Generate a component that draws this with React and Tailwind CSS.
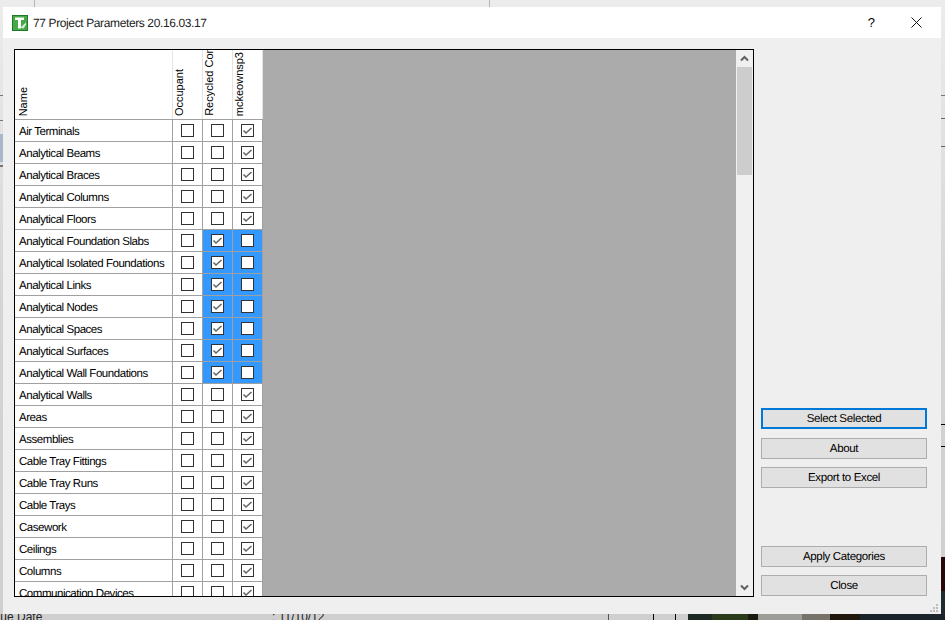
import React from 'react';

const ROWS = [
  ['Air Terminals', false, false, true],
  ['Analytical Beams', false, false, true],
  ['Analytical Braces', false, false, true],
  ['Analytical Columns', false, false, true],
  ['Analytical Floors', false, false, true],
  ['Analytical Foundation Slabs', false, true, false, true],
  ['Analytical Isolated Foundations', false, true, false, true],
  ['Analytical Links', false, true, false, true],
  ['Analytical Nodes', false, true, false, true],
  ['Analytical Spaces', false, true, false, true],
  ['Analytical Surfaces', false, true, false, true],
  ['Analytical Wall Foundations', false, true, false, true],
  ['Analytical Walls', false, false, true],
  ['Areas', false, false, true],
  ['Assemblies', false, false, true],
  ['Cable Tray Fittings', false, false, true],
  ['Cable Tray Runs', false, false, true],
  ['Cable Trays', false, false, true],
  ['Casework', false, false, true],
  ['Ceilings', false, false, true],
  ['Columns', false, false, true],
  ['Communication Devices', false, false, true],
];

const Check = ({ checked }) => (
  <span className="flex h-[13px] w-[13px] items-center justify-center border border-[#333333] bg-white">
    {checked && (
      <svg width="11" height="11" viewBox="0 0 11 11" fill="none">
        <path d="M1.5 5.5 L4 8 L9.5 3" stroke="#666666" strokeWidth="1.6" />
      </svg>
    )}
  </span>
);

const Cell = ({ checked, selected }) => (
  <div className={`flex w-[30px] items-center justify-center border-r border-[#a0a0a0] ${selected ? 'bg-[#3399ff]' : 'bg-white'}`}>
    <Check checked={checked} />
  </div>
);

const HeaderCell = ({ label, width }) => (
  <div className={`flex h-full items-end justify-start overflow-hidden border-r border-[#e4e4e4] bg-white ${width}`}>
    <span className="rotate-180 whitespace-nowrap pt-[3px] text-[11px] leading-[12px] text-black [writing-mode:vertical-rl]">
      {label}
    </span>
  </div>
);

const Btn = ({ children, focused, className = '' }) => (
  <button
    className={`h-[21px] w-[166px] shrink-0 bg-[#e1e1e1] pt-[3px] text-[11.5px] leading-none tracking-[-0.35px] text-black [text-rendering:geometricPrecision] ${focused ? 'border-2 border-[#0078d7]' : 'border border-[#adadad]'} ${className}`}
  >
    {children}
  </button>
);

export default function App() {
  return (
    <div className="relative h-[620px] w-[945px] overflow-hidden bg-gradient-to-b from-[#ececec] via-[#d4d4d4] to-[#cfcfcf] pb-[6px] pl-[3px] pr-[4px] pt-[7px] font-['Liberation_Sans',Arial,sans-serif]">
      {/* Bits of the window behind the dialog */}
      <div className="absolute left-[34px] top-0 h-[7px] w-px bg-[#b5b5b5]" />
      <div className="absolute left-[489px] top-0 h-[7px] w-px bg-[#b5b5b5]" />
      <div className="absolute left-0 top-[134px] h-[28px] w-[3px] bg-[#a9b8c9]" />
      <div className="absolute left-0 top-[95px] h-px w-[3px] bg-[#777777]" />
      <div className="absolute left-0 top-[120px] h-px w-[3px] bg-[#777777]" />
      <div className="absolute left-0 top-[165px] h-[2px] w-[3px] bg-[#777777]" />
      <div className="absolute right-0 top-[95px] h-px w-[4px] bg-[#777777]" />
      <div className="absolute right-0 top-[118px] h-px w-[4px] bg-[#666666]" />
      <div className="absolute right-0 top-[146px] h-px w-[4px] bg-[#666666]" />
      <div className="absolute right-0 top-[424px] h-px w-[4px] bg-black" />
      <div className="absolute right-0 top-[446px] h-px w-[4px] bg-black" />
      <div className="absolute right-0 top-[557px] h-[34px] w-[4px] bg-[#2a0505]" />
      <div className="absolute right-0 top-[591px] h-[29px] w-[4px] bg-[#1c2b30]" />
      <div className="absolute bottom-0 left-[688px] flex h-[6px] w-[257px]">
        <div className="w-[24px] bg-[#1d2a24]" />
        <div className="w-[36px] bg-[#2c3a1c]" />
        <div className="w-[10px] bg-[#1a1a10]" />
        <div className="w-[44px] bg-[#9c9c98]" />
        <div className="w-[28px] bg-[#77726a]" />
        <div className="w-[30px] bg-[#20180c]" />
        <div className="flex-1 bg-[#1b2428]" />
      </div>
      <div className="absolute bottom-0 left-[608px] h-[6px] w-px bg-[#555555]" />
      <div className="absolute bottom-0 left-[653px] h-[6px] w-px bg-black" />
      <div className="absolute bottom-0 left-[675px] h-[6px] w-px bg-black" />
      <div className="absolute left-[-15px] top-[610px] text-[12px] leading-[14px] text-[#222222]">Issue Date</div>
      <div className="absolute left-[272px] top-[610px] text-[12px] leading-[14px] text-[#222222]">: 11/10/12</div>

      {/* Dialog */}
      <div className="relative flex h-full flex-col bg-[#efefef]">
        {/* Title bar */}
        <div className="flex h-[31px] shrink-0 items-center bg-white pl-[9px]">
          <svg width="16" height="16" viewBox="0 0 16 16" className="shrink-0">
            <rect width="16" height="16" fill="#1f7a2a" />
            <rect x="1" y="1" width="14" height="14" fill="#46a846" />
            <path d="M3 2.5h9V5H9v8.5H6V5H3z" fill="#ffffff" />
            <path d="M8.5 12.5 L14 7.5 L14 9.5 L11.5 13.5 Z" fill="#d8f0d8" />
          </svg>
          <span className="ml-[5px] text-[12px] leading-none tracking-[-0.38px] text-[#222222] [text-rendering:geometricPrecision]">77 Project Parameters 20.16.03.17</span>
          <span className="ml-auto mr-[36px] text-[13px] text-black">?</span>
          <svg width="11" height="11" viewBox="0 0 11 11" className="mr-[19px]" fill="none">
            <path d="M0.5 0.5 L10.5 10.5 M10.5 0.5 L0.5 10.5" stroke="#111111" />
          </svg>
        </div>

        <div className="flex min-h-0 flex-1 pl-[11px] pr-[14px] pt-[11px]">
          {/* Grid */}
          <div className="flex h-[548px] w-[740px] shrink-0 border border-black">
            <div className="flex min-w-0 flex-1 overflow-hidden bg-[#ababab]">
              <div className="w-[248px] shrink-0">
                <div className="flex h-[70px] border-b border-[#a0a0a0]">
                  <HeaderCell label="Name" width="w-[158px] pl-[2px]" />
                  <HeaderCell label="Occupant" width="w-[30px]" />
                  <HeaderCell label="Recycled Content" width="w-[30px]" />
                  <HeaderCell label="mckeownsp3" width="w-[30px]" />
                </div>
                {ROWS.map(([name, a, b, c, selected]) => (
                  <div key={name} className="flex h-[22px] border-b border-[#a0a0a0]">
                    <div className="flex w-[158px] items-center overflow-hidden border-r border-[#a0a0a0] bg-white pl-[4px] pt-[5px] text-[11.5px] tracking-[-0.45px] text-black [text-rendering:geometricPrecision]">
                      <span className="whitespace-nowrap">{name}</span>
                    </div>
                    <Cell checked={a} />
                    <Cell checked={b} selected={selected} />
                    <Cell checked={c} selected={selected} />
                  </div>
                ))}
              </div>
            </div>
            {/* Scrollbar */}
            <div className="flex w-[17px] shrink-0 flex-col items-center bg-[#f0f0f0]">
              <div className="flex h-[17px] w-full items-center justify-center">
                <svg width="9" height="7" viewBox="0 0 9 7" fill="none">
                  <path d="M1 5.5 L4.5 2 L8 5.5" stroke="#606060" strokeWidth="2" />
                </svg>
              </div>
              <div className="h-[108px] w-[15px] bg-[#cdcdcd]" />
              <div className="flex-1" />
              <div className="flex h-[17px] w-full items-center justify-center">
                <svg width="9" height="7" viewBox="0 0 9 7" fill="none">
                  <path d="M1 1.5 L4.5 5 L8 1.5" stroke="#606060" strokeWidth="2" />
                </svg>
              </div>
            </div>
          </div>

          {/* Buttons */}
          <div className="ml-[7px] flex h-[548px] flex-1 flex-col pb-[1px] pt-[359px]">
            <Btn focused>Select Selected</Btn>
            <Btn className="mt-[9px]">About</Btn>
            <Btn className="mt-[8px]">Export to Excel</Btn>
            <Btn className="mt-auto">Apply Categories</Btn>
            <Btn className="mt-[8px]">Close</Btn>
          </div>
        </div>

        {/* Resize grip */}
        <svg width="9" height="9" viewBox="0 0 9 9" className="absolute bottom-[1px] right-[2px]" fill="#bdbdbd">
          <rect x="6" y="0" width="2" height="2" />
          <rect x="3" y="3" width="2" height="2" />
          <rect x="6" y="3" width="2" height="2" />
          <rect x="0" y="6" width="2" height="2" />
          <rect x="3" y="6" width="2" height="2" />
          <rect x="6" y="6" width="2" height="2" />
        </svg>
      </div>
    </div>
  );
}
